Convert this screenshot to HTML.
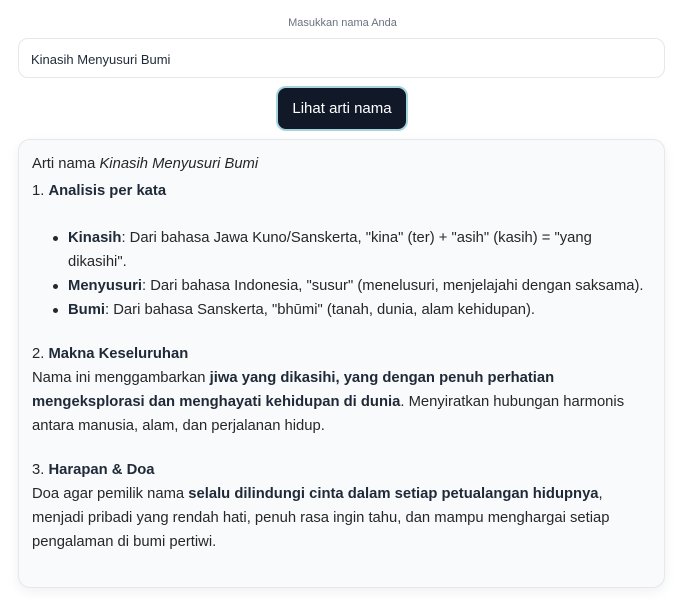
<!DOCTYPE html>
<html><head><meta charset="utf-8"><style>
*{box-sizing:border-box;margin:0;padding:0}
body{width:685px;height:608px;background:#fff;font-family:"Liberation Sans",sans-serif;color:#1f2937;position:relative;overflow:hidden}
.lbl{position:absolute;top:17px;left:0;width:685px;text-align:center;font-size:11px;color:#6b7280}
.inp{position:absolute;left:18px;top:38px;width:647px;height:40px;border:1px solid #e5e7eb;border-radius:10px;font-size:13px;padding:13px 0 0 12px;color:#1f2937}
.btn{position:absolute;left:276px;top:86px;width:132px;height:45px;background:#111827;border:2px solid #a5d4dc;border-radius:10px;color:#fff;font-size:15px;text-align:center;line-height:41px}
.card{position:absolute;left:18px;top:139px;width:647px;height:449px;background:#f8fafc;border:1px solid #e5e7eb;border-radius:12px;box-shadow:0 4px 12px rgba(0,0,0,.06);padding:14px 13px;font-size:14.8px;line-height:24px;color:#27272a}
.l{position:absolute;left:13px;white-space:nowrap}
ul{position:absolute;left:27px;top:86px;list-style:none}
li{position:relative;padding-left:22px;white-space:nowrap}
li:before{content:"";position:absolute;left:7px;top:10px;width:5px;height:5px;border-radius:50%;background:#27272a}
b{font-weight:bold;color:#1f2937}
</style></head><body>
<div class="lbl">Masukkan nama Anda</div>
<div class="inp">Kinasih Menyusuri Bumi</div>
<div class="btn">Lihat arti nama</div>
<div class="card">
<div class="l" style="top:12px">Arti nama <i>Kinasih Menyusuri Bumi</i></div>
<div class="l" style="top:39px">1. <b>Analisis per kata</b></div>
<ul>
<li><b>Kinasih</b>: Dari bahasa Jawa Kuno/Sanskerta, "kina" (ter) + "asih" (kasih) = "yang<br>dikasihi".</li>
<li><b>Menyusuri</b>: Dari bahasa Indonesia, "susur" (menelusuri, menjelajahi dengan saksama).</li>
<li><b>Bumi</b>: Dari bahasa Sanskerta, "bhūmi" (tanah, dunia, alam kehidupan).</li>
</ul>
<div class="l" style="top:202px">2. <b>Makna Keseluruhan</b></div>
<div class="l" style="top:226px">Nama ini menggambarkan <b>jiwa yang dikasihi, yang dengan penuh perhatian</b></div>
<div class="l" style="top:250px"><b>mengeksplorasi dan menghayati kehidupan di dunia</b>. Menyiratkan hubungan harmonis</div>
<div class="l" style="top:274px">antara manusia, alam, dan perjalanan hidup.</div>
<div class="l" style="top:318px">3. <b>Harapan &amp; Doa</b></div>
<div class="l" style="top:342px">Doa agar pemilik nama <b>selalu dilindungi cinta dalam setiap petualangan hidupnya</b>,</div>
<div class="l" style="top:366px">menjadi pribadi yang rendah hati, penuh rasa ingin tahu, dan mampu menghargai setiap</div>
<div class="l" style="top:390px">pengalaman di bumi pertiwi.</div>
</div>
</body></html>
